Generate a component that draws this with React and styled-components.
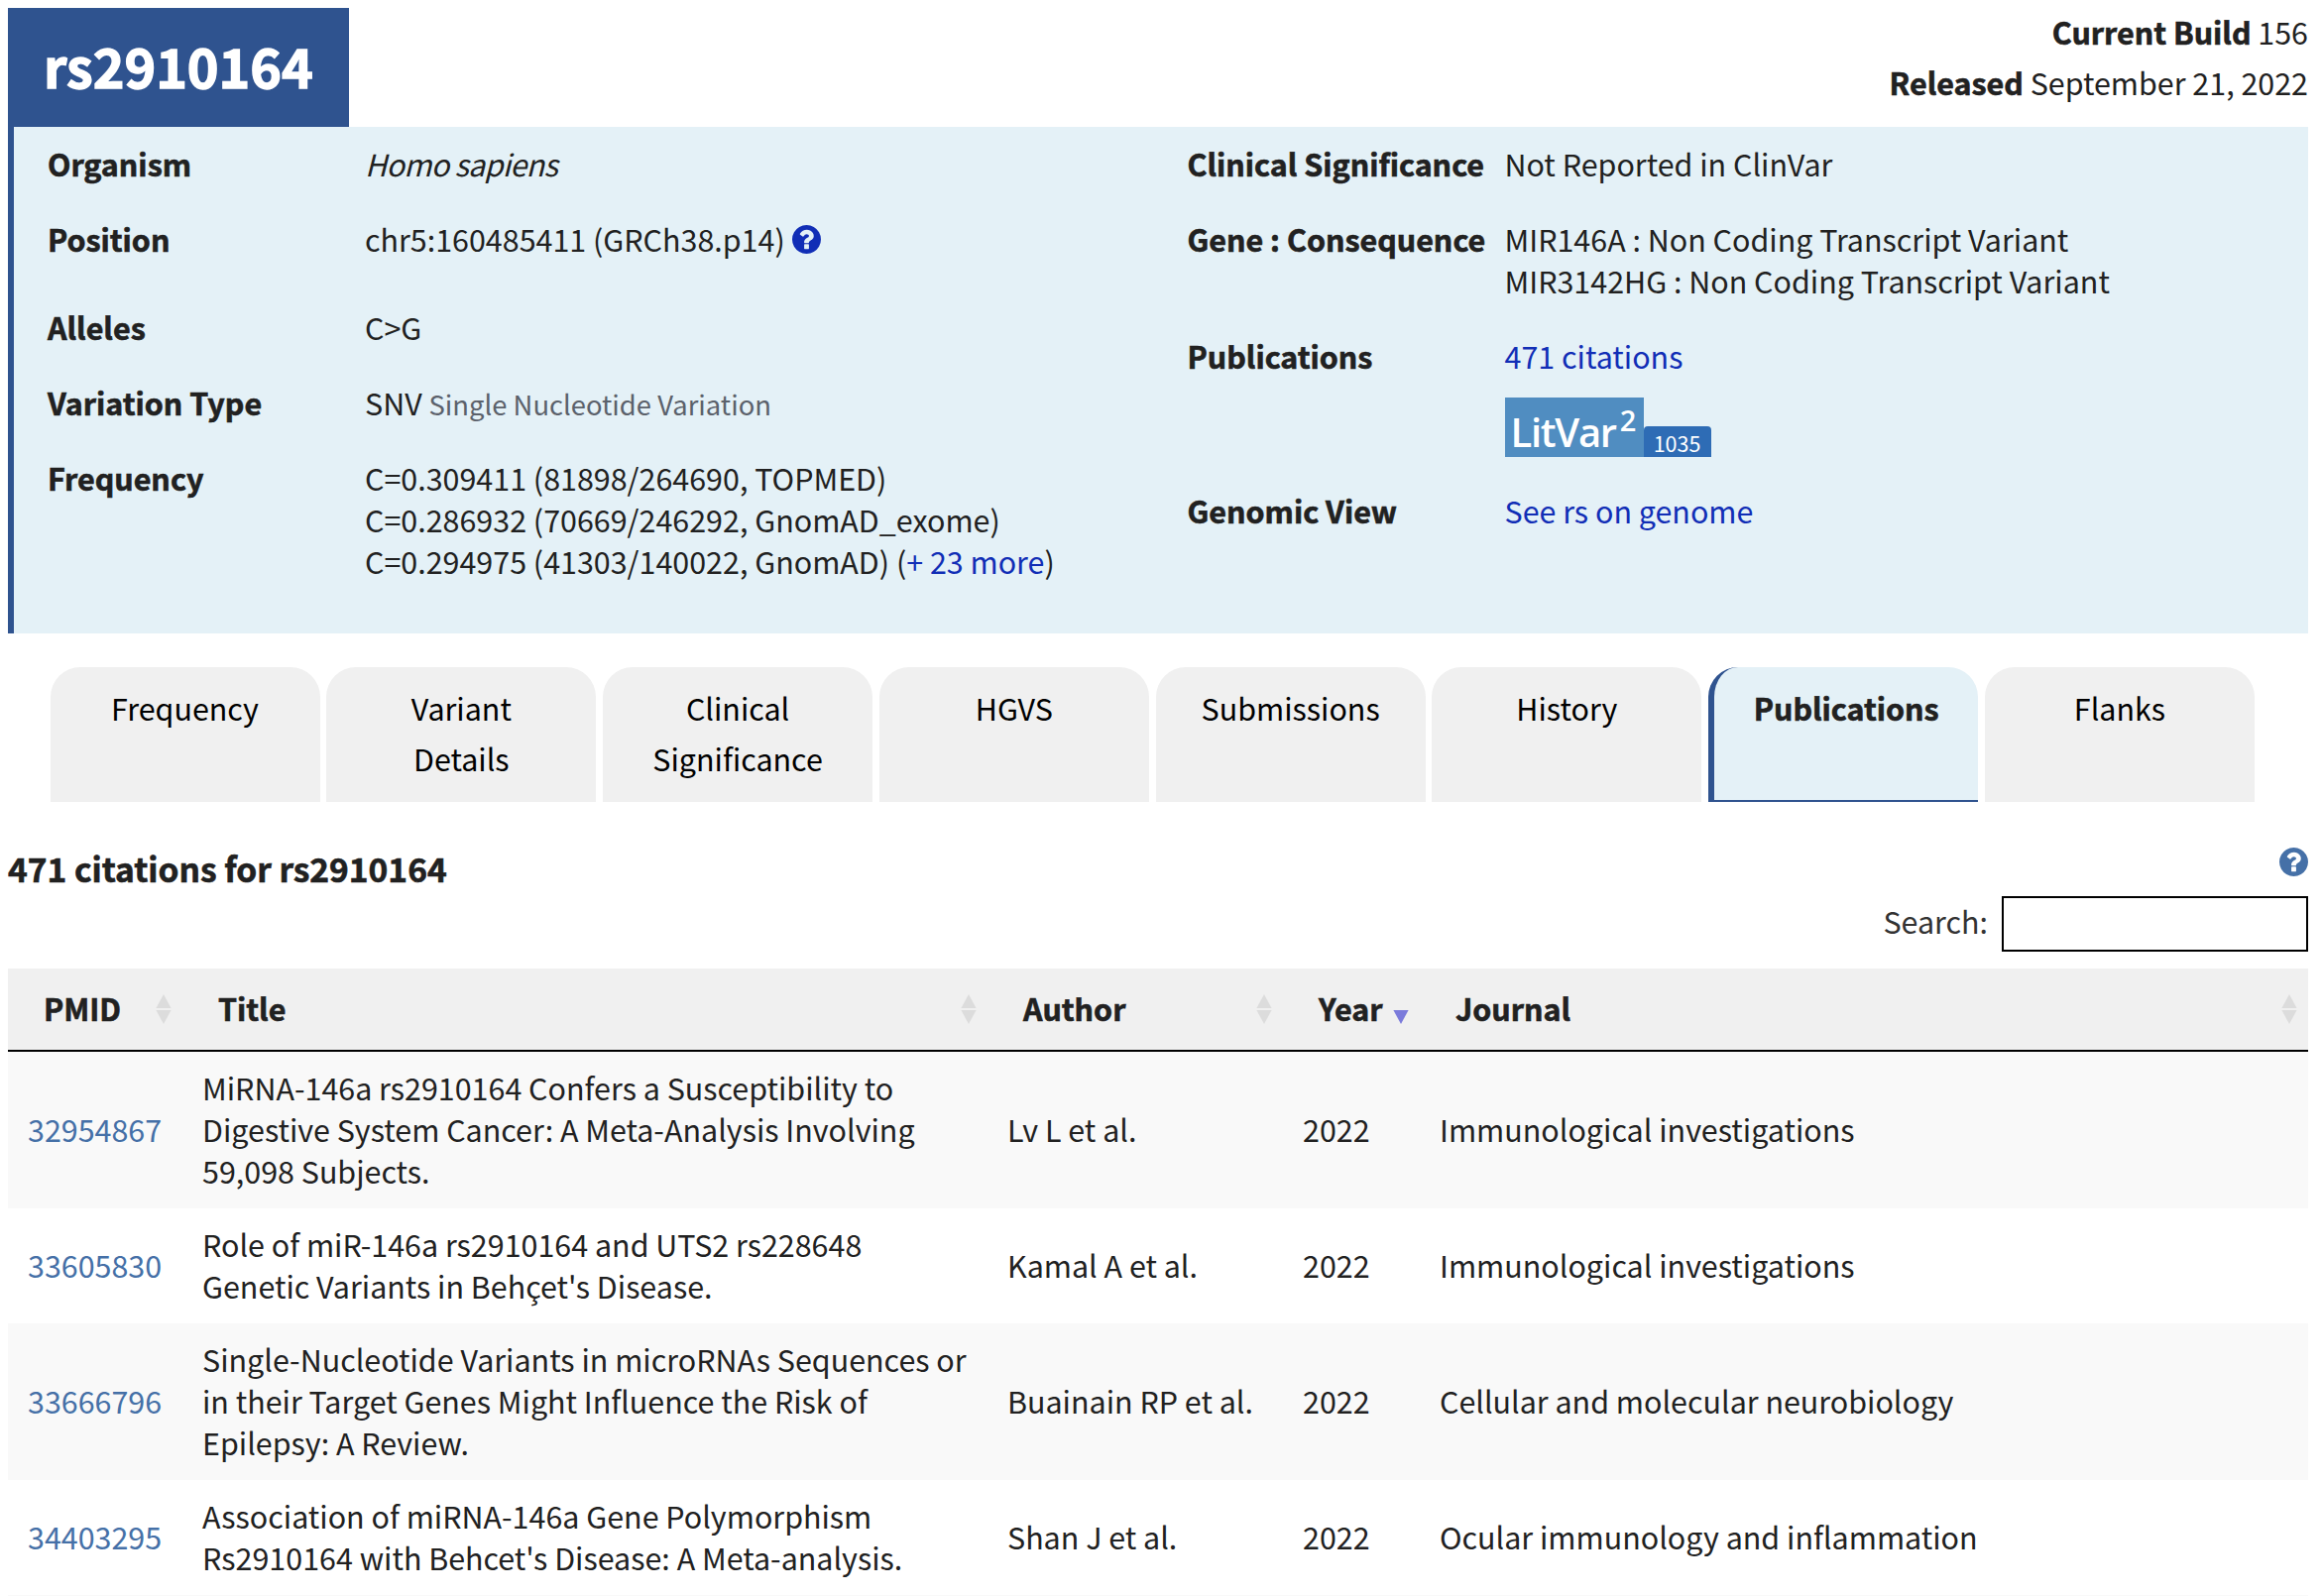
import React from "react";
import styled, { createGlobalStyle, css } from "styled-components";

const GlobalStyle = createGlobalStyle`
  *, *::before, *::after { box-sizing: border-box; }
  html, body { margin: 0; padding: 0; background: #fff; }
  body {
    overflow: hidden;
    font-family: "Noto Sans CJK SC", "Noto Sans", sans-serif;
    font-size: 30.44px;
    line-height: 42px;
    color: #212121;
    font-kerning: normal;
    -webkit-font-smoothing: antialiased;
  }
`;

const heavy = css`
  font-weight: 700;
  -webkit-text-stroke: 0.6px currentColor;
`;

const Page = styled.main`
  display: flex;
  flex-direction: column;
  width: 2342px;
  height: 1610px;
  padding: 8px 14px 0 8px;
  overflow: hidden;
`;

const Header = styled.header`
  display: flex;
  justify-content: space-between;
  flex: none;
  height: 120px;
`;

const RsTitle = styled.h1`
  display: flex;
  align-items: center;
  width: 344px;
  margin: 0;
  padding: 0 0 4px 36px;
  background: #2f538f;
  color: #fff;
  font-size: 53.8px;
  font-weight: 700;
  line-height: 80px;
  white-space: nowrap;
  -webkit-text-stroke: 1.4px currentColor;
`;

const Build = styled.p`
  margin: -1px 0 0;
  text-align: right;
  line-height: 51px;
  white-space: nowrap;
`;

const Strong = styled.b`
  ${heavy}
`;

const Summary = styled.section`
  display: grid;
  grid-template-columns: 1149.5px 1fr;
  flex: none;
  height: 511px;
  padding: 16px 0 0 34px;
  border-left: 6px solid #2f538f;
  background: #e4f1f7;
`;

const FactList = styled.dl`
  display: flex;
  flex-direction: column;
  gap: 34px;
  margin: 0;
`;

const Fact = styled.div`
  display: grid;
  grid-template-columns: 320px 1fr;
  flex: none;
  height: ${(p) => p.$height || 42}px;
`;

const FactName = styled.dt`
  ${heavy}
  white-space: nowrap;
`;

const FactValue = styled.dd`
  margin: 0;
  white-space: nowrap;
`;

const Species = styled.i`
  letter-spacing: -0.7px;
`;

const Line = styled.div`
  display: flex;
  align-items: center;
  gap: ${(p) => p.$gap || 0}px;
  height: 42px;
  white-space: pre;
`;

const Link = styled.a`
  color: ${(p) => (p.$soft ? "#4570a7" : "#112eb6")};
  text-decoration: none;
`;

const Muted = styled.small`
  color: #5b616b;
  font-size: 27.4px;
  line-height: 1;
`;

const LitVar = styled.div`
  display: flex;
  align-items: flex-end;
  margin-top: 21px;
  height: 60px;
`;

const LitVarLogo = styled.span`
  display: flex;
  width: 140px;
  height: 60px;
  padding: 5px 0 0 6px;
  background: #508dc1;
  color: #fff;
  font-family: "Open Sans", "Noto Sans", sans-serif;
  font-size: 40px;
  font-weight: 600;
  letter-spacing: -1.3px;
  line-height: 60px;
`;

const LitVarPower = styled.sup`
  margin: -12px 0 0 4px;
  font-size: 29px;
  font-weight: 600;
  line-height: 60px;
`;

const LitVarCount = styled.span`
  width: 68px;
  height: 31px;
  padding-top: 2px;
  border-radius: 4px 4px 0 0;
  background: #2e6cb5;
  color: #fff;
  font-size: 21.5px;
  line-height: 30px;
  text-align: center;
`;

const TabBar = styled.nav`
  display: grid;
  grid-template-columns: repeat(8, 272px);
  justify-content: space-between;
  flex: none;
  height: 136px;
  margin: 34px 54px 0 42.5px;
`;

const Tab = styled.a`
  padding-top: 16px;
  border-radius: 30px 30px 0 0;
  background: #f0f0f0;
  color: #000;
  line-height: 51px;
  text-align: center;
  white-space: pre-line;
  ${(p) =>
    p.$active &&
    css`
      ${heavy}
      border-left: 6px solid #2f538f;
      border-bottom: 2px solid #2f538f;
      background: #e4f1f7;
      color: #212121;
    `}
`;

const CitationsHead = styled.div`
  display: flex;
  justify-content: space-between;
  flex: none;
  height: 95px;
  padding-top: 46px;
`;

const CitationsTitle = styled.h2`
  margin: 0;
  ${heavy}
  font-size: 33.5px;
  line-height: 42px;
`;

const SearchRow = styled.label`
  display: flex;
  justify-content: flex-end;
  gap: 14px;
  flex: none;
  height: 73px;
  color: #333;
  line-height: 50px;
`;

const SearchInput = styled.input`
  width: 309px;
  height: 56px;
  padding: 0 12px;
  border: 2px solid #000;
  border-radius: 0;
  background: #fff;
  font: inherit;
  outline: none;
`;

const columns = css`
  display: grid;
  grid-template-columns: 176px 812px 298px 138px 1fr;
`;

const Table = styled.div`
  display: flex;
  flex-direction: column;
  flex: none;
`;

const HeadRow = styled.div`
  ${columns}
  ${heavy}
  height: 84px;
  border-bottom: 2px solid #000;
  background: #f0f0f0;
`;

const HeadCell = styled.div`
  display: flex;
  align-items: center;
  justify-content: space-between;
  padding: 0 11px 0 36px;
`;

const HeadName = styled.span`
  padding-bottom: 2px;
`;

const SortIcon = styled.svg`
  flex: none;
  width: 16px;
  height: 30px;
`;

const Row = styled.div`
  ${columns}
  align-items: center;
  flex: none;
  padding: 15px 0 17px;
  background: ${(p) => (p.$odd ? "#f9f9f9" : "#fff")};
`;

const Cell = styled.div`
  padding-left: 20px;
  white-space: pre-line;
`;

const HelpSvg = styled.svg`
  display: block;
  flex: none;
  width: 29px;
  height: 29px;
  fill: ${(p) => p.$color};
`;

function HelpIcon({ color }) {
  return (
    <HelpSvg $color={color} viewBox="128 128 1536 1536" aria-hidden="true">
      <path d="M1024 1376v-192q0-14-9-23t-23-9h-192q-14 0-23 9t-9 23v192q0 14 9 23t23 9h192q14 0 23-9t9-23zm256-672q0-88-55.5-163t-138.5-116-170-41q-243 0-371 213-15 24 8 42l132 100q7 6 19 6 16 0 25-12 53-68 86-92 34-24 86-24 48 0 85.5 26t37.5 59q0 38-20 61t-68 45q-63 28-115.5 86.5t-52.5 125.5v36q0 14 9 23t23 9h192q14 0 23-9t9-23q0-19 21.5-49.5t54.5-49.5q32-18 49-28.5t46-35 44.5-48 28-60.5 12.5-81zm384 192q0 209-103 385.5t-279.5 279.5-385.5 103-385.5-103-279.5-279.5-103-385.5 103-385.5 279.5-279.5 385.5-103 385.5 103 279.5 279.5 103 385.5z" />
    </HelpSvg>
  );
}

function Sort({ descending }) {
  return (
    <SortIcon viewBox="0 0 16 30" aria-hidden="true">
      {!descending && <path d="M8 0 15.6 14H.4z" fill="#dcdcdc" />}
      <path d="M.4 16h15.2L8 30z" fill={descending ? "#7b7bdb" : "#dcdcdc"} />
    </SortIcon>
  );
}

const tabs = [
  "Frequency",
  "Variant\nDetails",
  "Clinical\nSignificance",
  "HGVS",
  "Submissions",
  "History",
  "Publications",
  "Flanks",
];

const headings = ["PMID", "Title", "Author", "Year", "Journal"];

const citations = [
  {
    pmid: "32954867",
    title:
      "MiRNA-146a rs2910164 Confers a Susceptibility to\nDigestive System Cancer: A Meta-Analysis Involving\n59,098 Subjects.",
    author: "Lv L et al.",
    journal: "Immunological investigations",
  },
  {
    pmid: "33605830",
    title: "Role of miR-146a rs2910164 and UTS2 rs228648\nGenetic Variants in Behçet's Disease.",
    author: "Kamal A et al.",
    journal: "Immunological investigations",
  },
  {
    pmid: "33666796",
    title:
      "Single-Nucleotide Variants in microRNAs Sequences or\nin their Target Genes Might Influence the Risk of\nEpilepsy: A Review.",
    author: "Buainain RP et al.",
    journal: "Cellular and molecular neurobiology",
  },
  {
    pmid: "34403295",
    title:
      "Association of miRNA-146a Gene Polymorphism\nRs2910164 with Behcet's Disease: A Meta-analysis.",
    author: "Shan J et al.",
    journal: "Ocular immunology and inflammation",
  },
];

export default function App() {
  return (
    <>
      <GlobalStyle />
      <Page>
        <Header>
          <RsTitle>rs2910164</RsTitle>
          <Build>
            <Strong>Current Build</Strong> 156
            <br />
            <Strong>Released</Strong> September 21, 2022
          </Build>
        </Header>

        <Summary>
          <FactList>
            <Fact>
              <FactName>Organism</FactName>
              <FactValue>
                <Species>Homo sapiens</Species>
              </FactValue>
            </Fact>
            <Fact $height={55}>
              <FactName>Position</FactName>
              <FactValue>
                <Line $gap={7}>
                  chr5:160485411 (GRCh38.p14)
                  <HelpIcon color="#112eb6" />
                </Line>
              </FactValue>
            </Fact>
            <Fact>
              <FactName>Alleles</FactName>
              <FactValue>C&gt;G</FactValue>
            </Fact>
            <Fact>
              <FactName>Variation Type</FactName>
              <FactValue>
                SNV <Muted>Single Nucleotide Variation</Muted>
              </FactValue>
            </Fact>
            <Fact $height={126}>
              <FactName>Frequency</FactName>
              <FactValue>
                <Line>C=0.309411 (81898/264690, TOPMED)</Line>
                <Line>C=0.286932 (70669/246292, GnomAD_exome)</Line>
                <Line>
                  C=0.294975 (41303/140022, GnomAD) (<Link>+ 23 more</Link>)
                </Line>
              </FactValue>
            </Fact>
          </FactList>

          <FactList>
            <Fact>
              <FactName>Clinical Significance</FactName>
              <FactValue>Not Reported in ClinVar</FactValue>
            </Fact>
            <Fact $height={84}>
              <FactName>Gene : Consequence</FactName>
              <FactValue>
                <Line>MIR146A : Non Coding Transcript Variant</Line>
                <Line>MIR3142HG : Non Coding Transcript Variant</Line>
              </FactValue>
            </Fact>
            <Fact $height={122}>
              <FactName>Publications</FactName>
              <FactValue>
                <Line>
                  <Link>471 citations</Link>
                </Line>
                <LitVar>
                  <LitVarLogo>
                    LitVar<LitVarPower>2</LitVarPower>
                  </LitVarLogo>
                  <LitVarCount>1035</LitVarCount>
                </LitVar>
              </FactValue>
            </Fact>
            <Fact>
              <FactName>Genomic View</FactName>
              <FactValue>
                <Link>See rs on genome</Link>
              </FactValue>
            </Fact>
          </FactList>
        </Summary>

        <TabBar>
          {tabs.map((name) => (
            <Tab key={name} $active={name === "Publications"}>
              {name}
            </Tab>
          ))}
        </TabBar>

        <CitationsHead>
          <CitationsTitle>471 citations for rs2910164</CitationsTitle>
          <HelpIcon color="#4570a7" />
        </CitationsHead>
        <SearchRow>
          Search:
          <SearchInput type="text" />
        </SearchRow>

        <Table>
          <HeadRow>
            {headings.map((name) => (
              <HeadCell key={name}>
                <HeadName>{name}</HeadName>
                <Sort descending={name === "Year"} />
              </HeadCell>
            ))}
          </HeadRow>
          {citations.map((c, i) => (
            <Row key={c.pmid} $odd={i % 2 === 0}>
              <Cell>
                <Link $soft>{c.pmid}</Link>
              </Cell>
              <Cell>{c.title}</Cell>
              <Cell>{c.author}</Cell>
              <Cell>2022</Cell>
              <Cell>{c.journal}</Cell>
            </Row>
          ))}
          <Row $odd />
        </Table>
      </Page>
    </>
  );
}
